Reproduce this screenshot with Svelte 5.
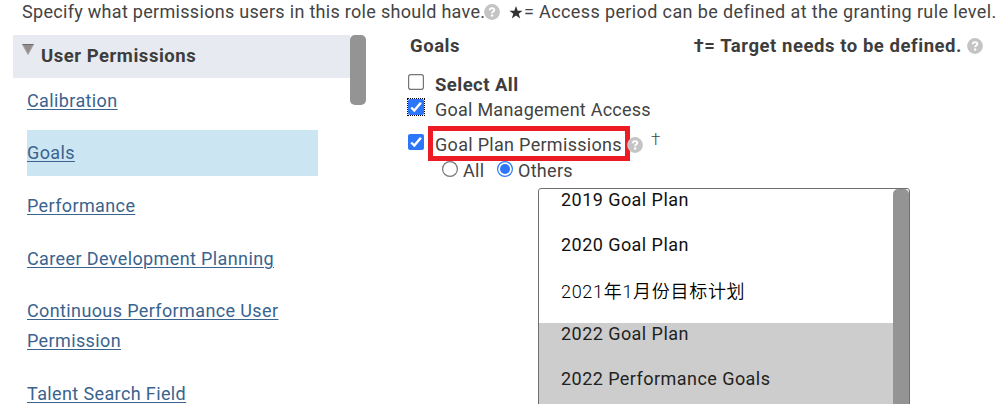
<script lang="ts">
  interface Plan {
    name: string;
    selected: boolean;
    lang?: string;
  }

  const categories = [
    "Calibration",
    "Goals",
    "Performance",
    "Career Development Planning",
    "Continuous Performance User Permission",
    "Talent Search Field",
  ];

  const plans: Plan[] = [
    { name: "2019 Goal Plan", selected: false },
    { name: "2020 Goal Plan", selected: false },
    { name: "2021年1月份目标计划", selected: false, lang: "zh" },
    { name: "2022 Goal Plan", selected: true },
    { name: "2022 Performance Goals", selected: true },
  ];

  let active = $state("Goals");
  let selectAll = $state(false);
  let management = $state(true);
  let planAccess = $state(true);
  let scope = $state("others");
</script>

{#snippet help()}
  <svg class="help" width="16" height="16" viewBox="0 0 16 16" aria-hidden="true">
    <circle cx="8" cy="8" r="7.9" fill="#c4c4c4" />
    <path
      d="M5.7 6.2C5.8 4.7 6.8 4.1 8 4.1c1.4 0 2.3.7 2.3 1.9 0 1.6-2.2 1.5-2.2 3.2"
      fill="none"
      stroke="#fff"
      stroke-width="1.9"
    />
    <circle cx="8.1" cy="11.5" r="1.2" fill="#fff" />
  </svg>
{/snippet}

{#snippet check(on: boolean)}
  <svg class="check" width="16" height="16" viewBox="0 0 16 16" aria-hidden="true">
    {#if on}
      <rect width="16" height="16" rx="2" fill="#2d76f9" />
      <path d="M3.2 8.5 6.3 11.5 12.9 3.7" fill="none" stroke="#fff" stroke-width="2.4" />
    {:else}
      <rect x=".6" y=".6" width="14.8" height="14.8" rx="2.2" fill="#fff" stroke="#767676" stroke-width="1.2" />
    {/if}
  </svg>
{/snippet}

{#snippet radio(on: boolean)}
  <svg class="radio" width="16" height="16" viewBox="0 0 16 16" aria-hidden="true">
    <circle cx="8" cy="8" r="7.4" fill="#fff" stroke={on ? "#2d76f9" : "#767676"} stroke-width="1.2" />
    {#if on}
      <circle cx="8" cy="8" r="5" fill="#2d76f9" />
    {/if}
  </svg>
{/snippet}

<main class="page">
  <p class="intro">
    <span class="intro__text">Specify what permissions users in this role should have.</span>
    {@render help()}
    <svg class="star" width="14" height="13" viewBox="0 0 14 13" aria-hidden="true">
      <path d="M7 0 8.7 4.8H13.6L9.7 7.7 11.2 12.5 7 9.6 2.8 12.5 4.3 7.7.4 4.8H5.3Z" fill="#333" />
    </svg>
    <span class="intro__note">= Access period can be defined at the granting rule level.</span>
  </p>

  <div class="columns">
    <section class="sidebar">
      <div class="sidebar__body">
        <h2 class="sidebar__head">
          <svg class="arrow" width="12" height="11" viewBox="0 0 12 11" aria-hidden="true">
            <path d="M.5.5h11L6 10.5Z" fill="#918e8b" stroke="#aaa8a6" />
            <path d="M.5.5h11" stroke="#6f6d6b" />
          </svg>
          <span>User Permissions</span>
        </h2>
        <nav class="list">
          {#each categories as name}
            <button class="list__item" class:list__item--active={active === name} onclick={() => (active = name)}>
              <span>{name}</span>
            </button>
          {/each}
        </nav>
      </div>
      <div class="sidebar__thumb"></div>
    </section>

    <section class="detail">
      <header class="detail__head">
        <h2>Goals</h2>
        <div class="target"><span>†= Target needs to be defined.</span>{@render help()}</div>
      </header>

      <button class="perm perm--all" onclick={() => (selectAll = !selectAll)}>
        {@render check(selectAll)}<span>Select All</span>
      </button>
      <button class="perm perm--focus" onclick={() => (management = !management)}>
        {@render check(management)}<span>Goal Management Access</span>
      </button>
      <div class="plan">
        <button class="perm" onclick={() => (planAccess = !planAccess)}>
          {@render check(planAccess)}<span class="marked">Goal Plan Permissions</span>
        </button>
        {@render help()}
        <span class="dagger">†</span>
      </div>

      <div class="scope">
        <button class="scope__all" onclick={() => (scope = "all")}>{@render radio(scope === "all")}<span>All</span></button>
        <button onclick={() => (scope = "others")}>{@render radio(scope === "others")}<span>Others</span></button>
      </div>

      <div class="select">
        <ul class="select__list">
          {#each plans as plan}
            <li class:selected={plan.selected} class:tall={plan.lang === "zh"} lang={plan.lang}>{plan.name}</li>
          {/each}
        </ul>
        <div class="select__thumb"></div>
      </div>
    </section>
  </div>
</main>

<style>
  :global(body) {
    background: #fff;
    overflow: hidden;
  }

  .page {
    width: 1002px;
    height: 404px;
    overflow: hidden;
    display: flex;
    flex-direction: column;
    color: #434343;
    font: 18px/24px Roboto, "Noto Sans CJK SC", sans-serif;
    white-space: nowrap;
  }

  h2,
  p,
  ul {
    margin: 0;
    padding: 0;
    font-size: inherit;
    list-style: none;
  }
  button {
    display: flex;
    padding: 0;
    border: 0;
    background: none;
    color: inherit;
    font: inherit;
    letter-spacing: inherit;
    text-align: left;
  }
  svg {
    display: block;
    flex: none;
  }

  .intro {
    display: flex;
    align-items: center;
    height: 35px;
    padding: 0 0 11px 22px;
    box-sizing: border-box;
  }
  .intro__text {
    width: 462px;
    letter-spacing: 0.3px;
  }
  .intro__note {
    letter-spacing: 0.38px;
  }
  .star {
    margin: 0 1px 0 9px;
  }

  .columns {
    display: flex;
    flex: 1;
    min-height: 0;
  }

  .sidebar {
    display: flex;
    width: 353px;
    margin-left: 13px;
  }
  .sidebar__body {
    flex: 1;
  }
  .sidebar__head {
    display: flex;
    height: 43px;
    padding-left: 9px;
    background: #e7eaf0;
    color: #3d3d3d;
    font-size: 18.5px;
    line-height: 43px;
    letter-spacing: 0.53px;
    box-sizing: border-box;
  }
  .arrow {
    margin: 9px 7px 0 0;
  }
  .sidebar__thumb {
    width: 16px;
    height: 70px;
    border-radius: 5px;
    background: #949494;
  }

  .list {
    display: flex;
    flex-direction: column;
    gap: 6.7px;
    width: 291px;
    margin: -0.4px 0 0 14px;
    color: #3a638e;
  }
  .list__item {
    padding: 8px 13px 8px 0;
    line-height: 30px;
    letter-spacing: 0.38px;
    white-space: normal;
    text-decoration: underline;
    text-underline-offset: 2px;
    text-decoration-thickness: 1px;
  }
  .list__item--active {
    background: #cce5f2;
  }

  .detail {
    flex: 1;
    display: flex;
    flex-direction: column;
    align-items: flex-start;
    padding-left: 42px;
  }
  .detail__head {
    display: flex;
    flex: none;
    justify-content: space-between;
    align-self: stretch;
    height: 37px;
    padding: 0 19px 0 2px;
    line-height: 22px;
    font-size: 18.5px;
    font-weight: 700;
    color: #3d3d3d;
    letter-spacing: 0.55px;
  }
  .target {
    display: flex;
    gap: 5px;
  }
  .target .help {
    margin-top: 3px;
  }

  .perm {
    flex: none;
    gap: 11px;
    height: 25px;
    line-height: 26px;
    letter-spacing: 0.25px;
  }
  .perm .check {
    margin-top: 2px;
  }
  .perm--all {
    font-size: 18.5px;
    font-weight: 700;
    color: #3d3d3d;
    letter-spacing: 0.45px;
  }
  .perm--focus .check {
    outline: 1px dotted #000;
  }

  .plan {
    display: flex;
    flex: none;
    height: 35px;
    margin-top: 4px;
  }
  .plan .perm {
    gap: 4px;
    height: 35px;
    letter-spacing: 0.3px;
  }
  .plan .check {
    margin-top: 8px;
  }
  .marked {
    width: 202px;
    height: 35px;
    border: 5px solid #ed1c24;
    padding-left: 2px;
    line-height: 27px;
    box-sizing: border-box;
  }
  .plan > .help {
    margin: 11px 0 0 -3px;
  }
  .dagger {
    margin: 1px 0 0 8px;
    font-size: 17px;
    font-weight: 300;
  }

  .scope {
    display: flex;
    flex: none;
    height: 27px;
    margin-left: 34px;
    line-height: 19px;
    letter-spacing: 0.3px;
  }
  .scope button {
    gap: 5px;
  }
  .scope .scope__all {
    width: 55px;
  }

  .select {
    display: flex;
    flex: none;
    width: 372px;
    height: 260px;
    margin-left: 130px;
    border: 1px solid #6f6f6f;
    border-radius: 3px;
    background: #fff;
    color: #111;
    box-sizing: border-box;
  }
  .select__list {
    flex: 1;
  }
  .select__list li {
    height: 44.67px;
    padding-left: 22px;
    line-height: 22px;
    letter-spacing: 0.45px;
    box-sizing: border-box;
  }
  .select__list .tall {
    color: #000;
    font-weight: 350;
    line-height: 28px;
    letter-spacing: 0.7px;
  }
  .select__list .selected {
    background: #cdcdcd;
    color: #222;
  }
  .select__thumb {
    width: 16px;
    border-radius: 5px;
    background: #949494;
  }
</style>
